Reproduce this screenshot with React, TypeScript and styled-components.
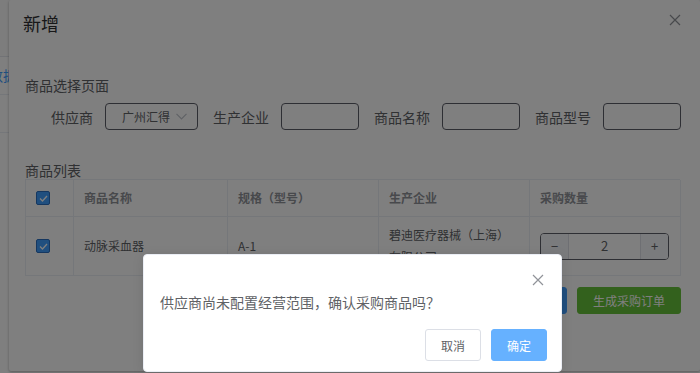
import React from 'react';
import styled, { createGlobalStyle } from 'styled-components';

const GlobalStyle = createGlobalStyle`
  html, body { margin: 0; padding: 0; width: 700px; height: 373px; overflow: hidden; background: #fff; }
  body { font-family: "Noto Sans CJK SC", "Noto Sans", "Liberation Sans", sans-serif; }
  * { box-sizing: border-box; }
`;

const Screen = styled.div`
  position: relative;
  width: 700px;
  height: 373px;
  overflow: hidden;
  background: #fff;
`;

/* background page */
const BgHeader = styled.div`
  height: 57px;
  background: #fbfbfb;
  border-bottom: 1px solid #e4e7ed;
`;
const BgRow = styled.div`
  height: 38px;
  border-bottom: 1px solid #ebeef5;
  color: #409eff;
  font-size: 14px;
  line-height: 36px;
  white-space: nowrap;
  text-indent: -11px;
`;

/* dialog */
const Dialog = styled.div`
  position: absolute;
  left: 9px;
  top: 0;
  width: 691px;
  height: 371px;
  background: #fff;
  border-radius: 2px;
  box-shadow: 0 1px 3px rgba(0, 0, 0, 0.3);
`;
const DialogHeader = styled.div`
  position: relative;
  padding: 11px 14px 0;
  height: 60px;
`;
const DialogTitle = styled.span`
  font-size: 18px;
  line-height: 24px;
  color: #303133;
`;
const CloseBtn = styled.span<{ $top: number; $right: number }>`
  position: absolute;
  top: ${p => p.$top}px;
  right: ${p => p.$right}px;
  display: flex;
  width: 12px;
  height: 12px;
`;
const DialogBody = styled.div`
  padding: 16px 19px 0 16px;
  color: #606266;
`;
const SectionTitle = styled.div<{ $mt: number }>`
  margin-top: ${p => p.$mt}px;
  font-size: 14px;
  line-height: 18px;
  color: #606266;
`;
const FilterRow = styled.div`
  display: flex;
  align-items: center;
  gap: 15px;
  margin-top: 9px;
  height: 27px;
`;
const FormItem = styled.div`
  display: flex;
  align-items: center;
`;
const Label = styled.label<{ $w?: number }>`
  width: ${p => (p.$w ? `${p.$w}px` : 'auto')};
  text-align: right;
  padding-right: 12px;
  font-size: 14px;
  line-height: 20px;
  color: #606266;
`;
const Select = styled.div`
  display: flex;
  align-items: center;
  justify-content: space-between;
  width: 93px;
  height: 27px;
  padding: 0 10px 0 16px;
  border: 1px solid #5d5e68;
  border-radius: 4px;
  font-size: 12px;
  color: #606266;
`;
const TextInput = styled.div`
  width: 78px;
  height: 27px;
  border: 1px solid #5d5e68;
  border-radius: 4px;
`;

const Table = styled.div`
  margin-top: 0;
  width: 655px;
  border-top: 1px solid #ebeef5;
  border-left: 1px solid #ebeef5;
  font-size: 12px;
`;
const TRow = styled.div`
  display: grid;
  grid-template-columns: 48px 154px 151px 151px 151px;
`;
const Cell = styled.div<{ $head?: boolean }>`
  display: flex;
  align-items: center;
  padding: 7px 10px;
  min-height: ${p => (p.$head ? 37 : 59)}px;
  line-height: 22px;
  border-right: 1px solid #ebeef5;
  border-bottom: 1px solid #ebeef5;
  color: ${p => (p.$head ? '#909399' : '#606266')};
  font-weight: ${p => (p.$head ? 700 : 400)};
`;
const CheckCell = styled(Cell)`
  padding-left: 10px;
`;
const Checkbox = styled.span`
  display: flex;
  align-items: center;
  justify-content: center;
  width: 14px;
  height: 14px;
  border-radius: 2px;
  background: #409eff;
  border: 1px solid #2b6fc0;
`;
const NumberInput = styled.div`
  display: flex;
  width: 129px;
  height: 27px;
  border: 1px solid #5d5e68;
  border-radius: 4px;
  overflow: hidden;
`;
const NumBtn = styled.span<{ $side: 'l' | 'r' }>`
  display: flex;
  align-items: center;
  justify-content: center;
  width: 28px;
  background: #f5f7fa;
  color: #606266;
  font-size: 13px;
  ${p => (p.$side === 'l' ? 'border-right: 1px solid #dcdfe6;' : 'border-left: 1px solid #dcdfe6;')}
`;
const NumValue = styled.span`
  flex: 1;
  display: flex;
  align-items: center;
  justify-content: center;
  font-size: 13px;
  color: #606266;
`;
const Actions = styled.div`
  display: flex;
  justify-content: flex-end;
  gap: 10px;
  margin-top: 11px;
  width: 656px;
`;
const Button = styled.button<{ $color: string; $w: number }>`
  width: ${p => p.$w}px;
  height: 27px;
  padding: 0;
  border: 1px solid ${p => p.$color};
  background: ${p => p.$color};
  color: #fff;
  border-radius: 3px;
  font-family: inherit;
  font-size: 12px;
`;

const Mask = styled.div`
  position: absolute;
  inset: 0;
  background: rgba(0, 0, 0, 0.5);
`;

/* message box */
const MsgBox = styled.div`
  position: absolute;
  left: 143px;
  top: 254px;
  width: 419px;
  height: 118px;
  background: #fff;
  border-radius: 4px;
  border: 1px solid #ebeef5;
  box-shadow: 0 2px 12px rgba(0, 0, 0, 0.1);
  display: flex;
  flex-direction: column;
`;
const MsgHeader = styled.div`
  position: relative;
  height: 35px;
`;
const MsgText = styled.p`
  margin: 0;
  padding: 0 16px;
  font-size: 14px;
  line-height: 24px;
  color: #606266;
`;
const MsgBtns = styled.div`
  display: flex;
  justify-content: flex-end;
  gap: 10px;
  padding: 15px 14px 0;
`;
const MsgButton = styled.button<{ $primary?: boolean }>`
  width: 56px;
  height: 32px;
  padding: 0;
  border-radius: 3px;
  font-family: inherit;
  font-size: 12px;
  border: 1px solid ${p => (p.$primary ? '#66b1ff' : '#dcdfe6')};
  background: ${p => (p.$primary ? '#66b1ff' : '#fff')};
  color: ${p => (p.$primary ? '#fff' : '#606266')};
`;

const XIcon = ({ size, color }: { size: number; color: string }) => (
  <svg width={size} height={size} viewBox="0 0 12 12" fill="none">
    <path d="M1 1L11 11M11 1L1 11" stroke={color} strokeWidth="1.2" />
  </svg>
);

const Chevron = () => (
  <svg width="11" height="7" viewBox="0 0 11 7" fill="none">
    <path d="M0.5 0.8L5.5 5.8L10.5 0.8" stroke="#c0c4cc" strokeWidth="1.2" />
  </svg>
);

const Check = () => (
  <svg width="9" height="7" viewBox="0 0 9 7" fill="none">
    <path d="M1 3.5L3.5 6L8 1" stroke="#fff" strokeWidth="1.3" />
  </svg>
);

export default function App() {
  return (
    <>
      <GlobalStyle />
      <Screen>
        <BgHeader />
        <BgRow>数据</BgRow>
        <BgRow />

        <Dialog>
          <DialogHeader>
            <DialogTitle>新增</DialogTitle>
            <CloseBtn $top={14} $right={19}>
              <XIcon size={12} color="#909399" />
            </CloseBtn>
          </DialogHeader>
          <DialogBody>
            <SectionTitle $mt={0}>商品选择页面</SectionTitle>
            <FilterRow>
              <FormItem>
                <Label $w={80}>供应商</Label>
                <Select>
                  <span>广州汇得</span>
                  <Chevron />
                </Select>
              </FormItem>
              <FormItem>
                <Label>生产企业</Label>
                <TextInput />
              </FormItem>
              <FormItem>
                <Label>商品名称</Label>
                <TextInput />
              </FormItem>
              <FormItem>
                <Label>商品型号</Label>
                <TextInput />
              </FormItem>
            </FilterRow>
            <SectionTitle $mt={31}>商品列表</SectionTitle>
            <Table>
              <TRow>
                <CheckCell $head>
                  <Checkbox><Check /></Checkbox>
                </CheckCell>
                <Cell $head>商品名称</Cell>
                <Cell $head>规格（型号）</Cell>
                <Cell $head>生产企业</Cell>
                <Cell $head>采购数量</Cell>
              </TRow>
              <TRow>
                <CheckCell>
                  <Checkbox><Check /></Checkbox>
                </CheckCell>
                <Cell>动脉采血器</Cell>
                <Cell>A-1</Cell>
                <Cell>碧迪医疗器械（上海）有限公司</Cell>
                <Cell>
                  <NumberInput>
                    <NumBtn $side="l">−</NumBtn>
                    <NumValue>2</NumValue>
                    <NumBtn $side="r">+</NumBtn>
                  </NumberInput>
                </Cell>
              </TRow>
            </Table>
            <Actions>
              <Button $color="#409eff" $w={80}>加入清单</Button>
              <Button $color="#67c23a" $w={104}>生成采购订单</Button>
            </Actions>
          </DialogBody>
        </Dialog>

        <Mask />

        <MsgBox>
          <MsgHeader>
            <CloseBtn $top={19} $right={17}>
              <XIcon size={12} color="#909399" />
            </CloseBtn>
          </MsgHeader>
          <MsgText>供应商尚未配置经营范围，确认采购商品吗？</MsgText>
          <MsgBtns>
            <MsgButton>取消</MsgButton>
            <MsgButton $primary>确定</MsgButton>
          </MsgBtns>
        </MsgBox>
      </Screen>
    </>
  );
}
